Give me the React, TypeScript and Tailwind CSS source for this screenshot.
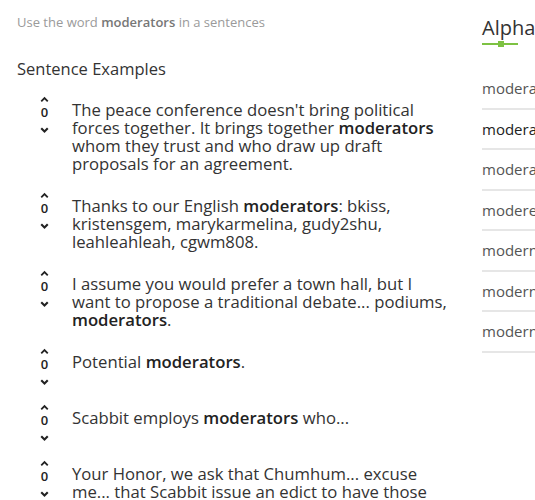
import React from "react";

type Sentence = { parts: (string | { b: string })[] };

const SENTENCES: Sentence[] = [
  { parts: ["The peace conference doesn't bring political forces together. It brings together ", { b: "moderators" }, " whom they trust and who draw up draft proposals for an agreement."] },
  { parts: ["Thanks to our English ", { b: "moderators" }, ": bkiss, kristensgem, marykarmelina, gudy2shu, leahleahleah, cgwm808."] },
  { parts: ["I assume you would prefer a town hall, but I want to propose a traditional debate... podiums, ", { b: "moderators" }, "."] },
  { parts: ["Potential ", { b: "moderators" }, "."] },
  { parts: ["Scabbit employs ", { b: "moderators" }, " who..."] },
  { parts: ["Your Honor, we ask that Chumhum... excuse me... that Scabbit issue an edict to have those moderators removed."] },
];

const WORDS = ["moderator", "moderators", "moderato", "moderen", "modern", "moderne", "modernise"];

function Vote() {
  return (
    <div className="flex h-[38px] w-[55px] shrink-0 flex-col items-center text-[#222]">
      <svg width="11" height="8" viewBox="0 0 11 8" className="mt-[1px]">
        <path d="M1.5 6.5 L5.5 2.5 L9.5 6.5" fill="none" stroke="currentColor" strokeWidth="2.2" />
      </svg>
      <span className="mt-[2px] text-[13px] font-semibold leading-[14px]">0</span>
      <svg width="11" height="8" viewBox="0 0 11 8" className="mt-[8px]">
        <path d="M1.5 1.5 L5.5 5.5 L9.5 1.5" fill="none" stroke="currentColor" strokeWidth="2.6" />
      </svg>
    </div>
  );
}

export default function App() {
  return (
    <div className="h-[500px] w-[535px] overflow-hidden bg-white" style={{ fontFamily: '"Open Sans", sans-serif' }}>
      <div className="flex w-[720px] pl-[17px]">
        {/* Left column */}
        <div className="w-[443px] shrink-0">
          <p className="pt-[13px] text-[13px] leading-[18px] text-[#9a9a9a]">
            Use the word <span className="font-semibold text-[#777]">moderators</span> in a sentences
          </p>
          <h2 className="mt-[28px] text-[16.5px] leading-[20px] text-[#333]">Sentence Examples</h2>
          <div className="mt-[16px] flex flex-col gap-[18px]">
            {SENTENCES.map((s, i) => (
              <div key={i} className="flex items-start">
                <Vote />
                <p className="mt-[6px] w-[382px] text-[16.7px] leading-[18px] text-[#333]">
                  {s.parts.map((p, j) =>
                    typeof p === "string" ? <span key={j}>{p}</span> : <b key={j} className="font-semibold text-[#222]">{p.b}</b>
                  )}
                </p>
              </div>
            ))}
          </div>
        </div>
        {/* Right column */}
        <div className="ml-[22px] w-[200px] shrink-0">
          <h3 className="pt-[16px] text-[20px] leading-[24px] text-[#333]">Alphabetical</h3>
          <div className="relative mt-[3px] h-[2px] w-[36px] bg-[#7dc242]">
            <div className="absolute left-[16px] top-[-2px] h-[6px] w-[6px] bg-[#7dc242]" />
          </div>
          <ul className="mt-[24px]">
            {WORDS.map((w, i) => (
              <li
                key={w}
                className={`flex h-[40.5px] items-center border-b-2 border-[#e6e6e6] text-[15px] ${i === 1 ? "text-[#222] font-medium" : "text-[#555]"}`}
              >
                {w}
              </li>
            ))}
          </ul>
        </div>
      </div>
    </div>
  );
}
